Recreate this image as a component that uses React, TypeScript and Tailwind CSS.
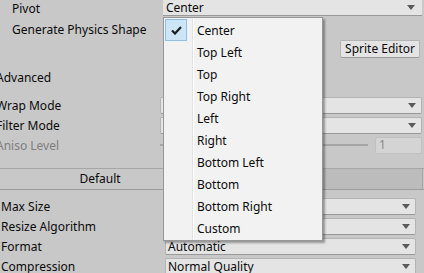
import React from "react";

const font = { fontFamily: '"Noto Sans", "Open Sans", sans-serif' };

const options = ["Center", "Top Left", "Top", "Top Right", "Left", "Right", "Bottom Left", "Bottom", "Bottom Right", "Custom"];

function Arrow() {
  return (
    <svg width="8" height="5" viewBox="0 0 8 5" className="shrink-0">
      <path d="M0 0h8L4 5z" fill="#5a5a5a" />
    </svg>
  );
}

function Field({ value = "", className = "" }: { value?: string; className?: string }) {
  return (
    <div className={`flex items-center justify-between h-[17px] pl-[2px] pr-[5px] bg-[#e4e4e4] border border-[#b4b4b4] border-b-[#999999] rounded-[2px] ${className}`}>
      <span className="text-[12px] leading-none text-[#0a0a0a] mt-[1px]">{value}</span>
      <Arrow />
    </div>
  );
}

function Row({ label, children, dim = false }: { label: string; children?: React.ReactNode; dim?: boolean }) {
  return (
    <div className="flex items-center h-[20px]">
      <span className={`w-[164px] shrink-0 mt-[1px] text-[12px] leading-none ${dim ? "text-[#7e7e7e]" : "text-[#0a0a0a]"}`}>{label}</span>
      <div className="flex-1">{children}</div>
    </div>
  );
}

export default function App() {
  return (
    <div className="relative w-[424px] h-[273px] overflow-hidden bg-[#c8c8c8]" style={font}>
      <div className="flex flex-col ml-[-4px]">
        {/* pivot */}
        <div className="flex items-center h-[16px]">
          <span className="w-[167px] shrink-0 pl-[16px] mt-[1px] text-[12px] leading-none text-[#0a0a0a]">Pivot</span>
          <div className="flex-1 h-[16px] flex items-center justify-between pl-[3px] pr-[7px] bg-[#e4e4e4] border-b border-[#999999] mr-[2px]">
            <span className="text-[12px] leading-none text-[#0a0a0a] mt-[1px]">Center</span>
            <Arrow />
          </div>
        </div>
        <div className="flex items-center h-[20px] mt-[3px]">
          <span className="pl-[16px] mt-[1px] text-[12px] leading-none text-[#0a0a0a]">Generate Physics Shape</span>
        </div>
        <div className="flex items-center justify-end h-[19px] pr-[4px]">
          <button className="h-[18px] px-[4px] bg-[#e4e4e4] border border-[#b4b4b4] border-b-[#9a9a9a] rounded-[2px] text-[12px] leading-none text-[#0a0a0a]">
            Sprite Editor
          </button>
        </div>

        {/* advanced */}
        <div className="flex items-center h-[20px] mt-[9px]">
          <span className="mt-[1px] text-[12px] leading-none text-[#0a0a0a]">Advanced</span>
        </div>
        <div className="flex flex-col mt-[8px] pr-[2px]">
          <Row label="Wrap Mode"><Field /></Row>
          <Row label="Filter Mode"><Field /></Row>
          <Row label="Aniso Level" dim>
            <div className="flex items-center gap-[7px]">
              <div className="flex-1 h-[2px] bg-[#a6a6a6]" />
              <div className="w-[47px] h-[17px] flex items-center pl-[3px] bg-[#d4d4d4] border border-[#c0c0c0] rounded-[2px] text-[12px] leading-none text-[#8a8a8a]">1</div>
            </div>
          </Row>
        </div>

        {/* platform tabs */}
        <div className="flex h-[22px] mt-[13px] border-t border-[#a6a6a6] border-b border-b-[#9c9c9c]">
          <div className="w-[208px] flex items-center justify-center bg-[#c8c8c8] text-[12px] leading-none text-[#0a0a0a]">Default</div>
          <div className="flex-1 bg-[#bcbcbc] border-r border-[#a6a6a6] mr-[1px]" />
        </div>
        <div className="flex flex-col mt-[6px] pl-[5px] pr-[8px]">
          <Row label="Max Size"><Field /></Row>
          <Row label="Resize Algorithm"><Field /></Row>
          <Row label="Format"><Field value="Automatic" /></Row>
          <Row label="Compression"><Field value="Normal Quality" /></Row>
        </div>
      </div>

      {/* pivot popup */}
      <div className="absolute left-[163px] top-[17px] w-[160px] bg-[#f2f2f2] border border-[#979797] shadow-[2px_2px_2px_rgba(0,0,0,0.35)] py-[1px]">
        <div className="absolute left-[28px] top-0 bottom-0 w-[1px] bg-[#e2e2e2]" />
        <div className="absolute left-[29px] top-0 bottom-0 w-[1px] bg-[#ffffff]" />
        <div className="flex flex-col">
          {options.map((o, i) => (
            <div key={o} className="relative flex items-center h-[22px]">
              <div className="w-[33px] h-[22px] shrink-0 flex items-center pl-[1px]">
                {i === 0 && (
                  <div className="w-[22px] h-[22px] flex items-center justify-center bg-[#cde6f7] border border-[#8cc0e6]">
                    <svg width="11" height="9" viewBox="0 0 11 9">
                      <path d="M1 4.5 L4 7.5 L10 1" fill="none" stroke="#1e1e1e" strokeWidth="2.2" />
                    </svg>
                  </div>
                )}
              </div>
              <span className="mt-[1px] text-[12px] leading-none text-[#0a0a0a]">{o}</span>
            </div>
          ))}
        </div>
      </div>
    </div>
  );
}
